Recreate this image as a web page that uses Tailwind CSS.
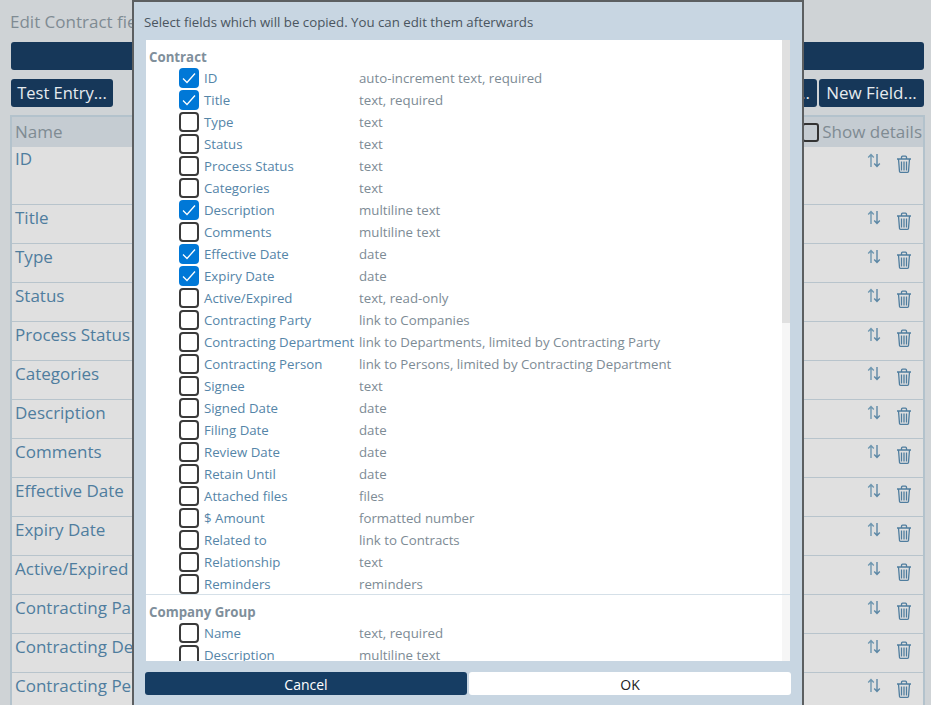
<!DOCTYPE html>
<html>
<head>
<meta charset="utf-8">
<script src="https://cdn.jsdelivr.net/npm/@tailwindcss/browser@4"></script>
<title>Edit Contract fields</title>
</head>
<body class="relative h-[705px] w-[931px] overflow-hidden bg-[#cfd3d6] font-['Open_Sans','Noto_Sans',sans-serif]">

<!-- page behind the dialog -->
<div class="pl-[11px] pr-[7px] pt-[11px]">
    <div class="-ml-px h-[22px] text-[17px] leading-[22px] text-[#7f8b93]">Edit Contract fields</div>
    <div class="mt-[9px] h-[28px] rounded-[3px] bg-[#163759]"></div>
    <div class="mt-[9px] flex h-[28px] gap-[2px]">
        <button class="w-[102px] rounded-[3px] bg-[#163759] text-[16.5px] text-[#e6ebef]">Test Entry...</button>
        <button class="ml-auto w-[100px] rounded-[3px] bg-[#163759] pr-[7px] text-right text-[17px] text-[#e6ebef]">Copy...</button>
        <button class="w-[105px] rounded-[3px] bg-[#163759] text-[17px] text-[#e6ebef]">New Field...</button>
    </div>
    <div class="mt-[8px] -mx-px border-2 border-b-0 border-[#b3c2cc] bg-[#e0e0e0]">
        <div class="flex h-[30px] items-center justify-between bg-[#c5ccd2] pl-[3px] pr-[1px] text-[17px] text-[#7f8b93]">
            <span>Name</span>
            <label class="flex items-center gap-[3px]"><span class="h-[19px] w-[17px] rounded-[3px] border-2 border-[#333]"></span>Show details</label>
        </div>
        <div id="rows"></div>
    </div>
</div>

<!-- dialog -->
<div class="absolute left-[132px] top-0 flex h-[712px] w-[672px] flex-col border-2 border-[#5c5f61] bg-[#c8d6e2] px-[11px]">
    <div class="-ml-px flex h-[38px] items-center pl-0 pt-[3px] text-[13.25px] text-[#4a5560]">Select fields which will be copied. You can edit them afterwards</div>
    <div class="relative ml-px h-[621px] w-[644px] overflow-hidden bg-white pl-[3px] text-[13.25px]">
        <!-- scrollbar -->
        <div class="absolute right-0 top-0 h-full w-[8px] bg-[#f6f6f6]">
            <div class="h-[283px] bg-[#e0e0e0]"></div>
        </div>
        <div id="list" class="relative"></div>
    </div>
    <div class="mt-[11px] flex h-[23px] gap-[2px]">
        <button class="w-[322px] rounded-[3px] bg-[#163d63] pt-px text-[14px] text-white">Cancel</button>
        <button class="w-[322px] rounded-[3px] bg-white pt-px text-[14px] text-[#222]">OK</button>
    </div>
</div>

<script>
const rows = [
    ['ID', 58, 24], ['Title', 39, 26], ['Type', 39, 26], ['Status', 39, 26], ['Process Status', 39, 26], ['Categories', 39, 26], ['Description', 39, 26],
    ['Comments', 39, 26], ['Effective Date', 39, 26], ['Expiry Date', 39, 26], ['Active/Expired', 39, 26], ['Contracting Party', 39, 26],
    ['Contracting Department', 39, 26], ['Contracting Person', 39, 26]
];
const sortIcon = '<svg width="14" height="15" viewBox="0 0 14 15" fill="none" stroke="#6f97b0" stroke-width="1.4"><path d="M4 14V2M1.2 4.5 4 1.5l2.8 3"/><path d="M10 1v12M7.2 10.500 10 13.500l2.800-3" stroke="#5c87a5"/></svg>';
const trashIcon = '<svg width="16" height="18" viewBox="0 0 16 18" fill="none" stroke="#4f7d9e" stroke-width="1.3"><path d="M1 4h14M5.500 4V2.200q0-1 1-1h3q1 0 1 1V4"/><path d="M2.500 4l1 12.500q0 .8 1 .8h7q1 0 1-.8l1-12.500"/><path d="M5.500 6.500v9M8 6.500v9M10.500 6.500v9"/></svg>';
document.getElementById('rows').innerHTML = rows.map(([name, h, lh], i) => `
    <div class="relative border-b border-[#b8c4cc] pl-[3px] text-[17px] text-[#4f7d9e] whitespace-nowrap" style="height:${h}px;line-height:${lh}px">
        <span>${name}</span>
        <span class="absolute left-[855px] leading-none ${i ? 'top-[5px]' : 'top-[6px]'}">${sortIcon}</span>
        <span class="absolute left-[884px] leading-none ${i ? 'top-[7px]' : 'top-[8px]'}">${trashIcon}</span>
    </div>`).join('');

const contract = [
    ['ID', 'auto-increment text, required', 1], ['Title', 'text, required', 1], ['Type', 'text'], ['Status', 'text'],
    ['Process Status', 'text'], ['Categories', 'text'], ['Description', 'multiline text', 1], ['Comments', 'multiline text'],
    ['Effective Date', 'date', 1], ['Expiry Date', 'date', 1], ['Active/Expired', 'text, read-only'],
    ['Contracting Party', 'link to Companies'], ['Contracting Department', 'link to Departments, limited by Contracting Party'],
    ['Contracting Person', 'link to Persons, limited by Contracting Department'], ['Signee', 'text'], ['Signed Date', 'date'],
    ['Filing Date', 'date'], ['Review Date', 'date'], ['Retain Until', 'date'], ['Attached files', 'files'],
    ['$ Amount', 'formatted number'], ['Related to', 'link to Contracts'], ['Relationship', 'text'], ['Reminders', 'reminders']
];
const group = [['Name', 'text, required'], ['Description', 'multiline text']];
const row = ([label, type, on]) => `
    <div class="flex h-[22px] items-center pl-[30px]">
        <span class="flex h-[20px] w-[20px] shrink-0 items-center justify-center rounded-[4px] ${on ? 'bg-[#0078d7]' : 'border-2 border-[#3a3a3a]'}">
            ${on ? '<svg width="14" height="12" viewBox="0 0 14 12" fill="none" stroke="#fff" stroke-width="1.300"><path d="M1 6.500 5 10.500 13 1.500"/></svg>' : ''}
        </span>
        <span class="ml-[5px] w-[155px] shrink-0 whitespace-nowrap pt-[2px] text-[#5585a8]">${label}</span>
        <span class="whitespace-nowrap pt-[2px] text-[#7d8b95]">${type}</span>
    </div>`;
document.getElementById('list').innerHTML = `
    <div class="pt-[8px] text-[13.25px] font-bold leading-[18px] text-[#7f8f9b]">Contract</div>
    <div class="mt-[1px]">${contract.map(row).join('')}</div>
    <div class="-ml-[3px] mt-[-1px] h-[1px] border-b border-[#d5e0e8]"></div>
    <div class="pt-[8px] text-[13.25px] font-bold leading-[18px] text-[#7f8f9b]">Company Group</div>
    <div class="mt-px">${group.map(row).join('')}</div>`;
</script>
</body>
</html>
